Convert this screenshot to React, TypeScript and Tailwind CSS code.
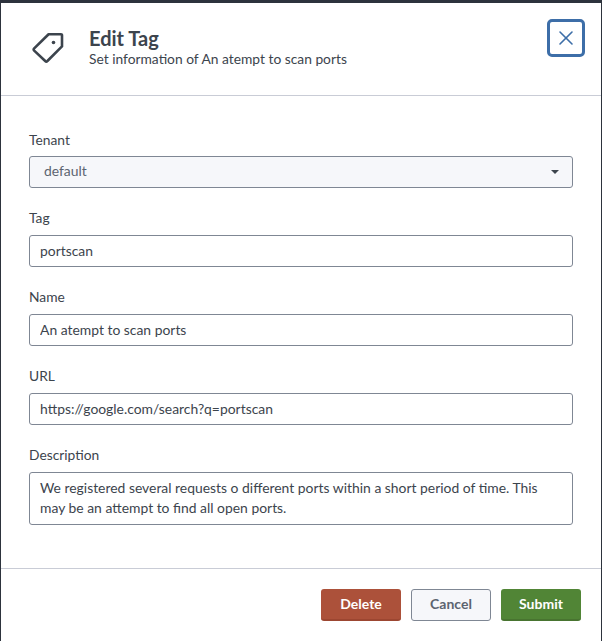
import { X } from 'lucide-react'

const fields = [
  { label: 'Tag', value: 'portscan' },
  { label: 'Name', value: 'An atempt to scan ports' },
  { label: 'URL', value: 'https://google.com/search?q=portscan' },
]

function TagIcon() {
  return (
    <svg className="w-[32px] h-[32px] text-[#3c444d]" viewBox="0 0 32 32" fill="none" stroke="currentColor" strokeWidth={2.6} strokeLinejoin="round">
      <path d="M2.2 17.4 L16.6 3.2 H29 a1 1 0 0 1 1 1 V15.4 L15.4 30 a1.6 1.6 0 0 1 -2.2 0 L2.2 19.6 a1.6 1.6 0 0 1 0 -2.2 Z" />
      <circle cx="21.5" cy="11.5" r="1.8" fill="currentColor" stroke="none" />
    </svg>
  )
}

export default function App() {
  return (
    <div className="h-[641px] w-[602px] overflow-hidden bg-[#2d333d] pt-[3px] pl-px pr-px font-['Lato',sans-serif] text-[#3c444d]">
      <div className="flex h-full flex-col bg-white">
        {/* Header */}
        <div className="flex h-[93px] shrink-0 items-start justify-between border-b border-[#c9ccd6] pl-[31px] pr-[16px]">
          <div className="flex items-center gap-[25px] pt-[23px]">
            <TagIcon />
            <div>
              <h1 className="text-[20px] leading-[24px] font-bold text-[#3c444d]">Edit Tag</h1>
              <p className="text-[13.8px] leading-[18px] text-[#3c444d]">Set information of An atempt to scan ports</p>
            </div>
          </div>
          <button className="mt-[16px] flex h-[38px] w-[38px] items-center justify-center rounded-[5px] border-[3px] border-[#3d6ea8] text-[#3d6ea8]">
            <X size={24} strokeWidth={1.6} />
          </button>
        </div>

        {/* Form */}
        <div className="flex flex-1 flex-col border-b border-[#c9ccd6] pt-[35px] pl-[28px] pr-[28px]">
          <label className="mb-[7px] block text-[13.8px] leading-[18px]">Tenant</label>
          <div className="flex h-[32px] items-center justify-between rounded-[3px] border border-[#7f8794] bg-[#f6f7fa] pb-[2px] pl-[14px] pr-[13px] text-[13.9px] text-[#5c6470]">
            <span>default</span>
            <span className="mt-[2px] h-0 w-0 border-x-[4px] border-t-[4px] border-x-transparent border-t-[#3c444d]"></span>
          </div>

          {fields.map((field) => (
            <div key={field.label} className="mt-[21px]">
              <label className="mb-[8px] block text-[13.8px] leading-[18px]">{field.label}</label>
              <input
                readOnly
                value={field.value}
                className="block h-[32px] w-full rounded-[3px] border border-[#7f8794] bg-white px-[10px] pb-[2px] text-[13.9px] text-[#3c444d] outline-none"
              />
            </div>
          ))}

          <div className="mt-[21px]">
            <label className="mb-[8px] block text-[13.8px] leading-[18px]">Description</label>
            <textarea
              readOnly
              rows={2}
              value="We registered several requests o different ports within a short period of time. This may be an attempt to find all open ports."
              className="block h-[53px] w-full resize-none rounded-[3px] border border-[#7f8794] bg-white px-[10px] py-[5px] text-[13.9px] leading-[20px] text-[#3c444d] outline-none"
            />
          </div>
        </div>

        {/* Footer */}
        <div className="flex h-[72px] shrink-0 items-start justify-end gap-[10px] pt-[20px] pr-[20px]">
          <button className="h-[32px] w-[80px] rounded-[3px] border-b-2 border-[#9c4631] bg-[#ac513a] pb-px text-[14px] font-bold text-white">Delete</button>
          <button className="h-[32px] w-[80px] rounded-[3px] border border-[#7f8794] bg-[#f6f7fa] pb-[3px] text-[14px] font-bold text-[#5c6470]">Cancel</button>
          <button className="h-[32px] w-[80px] rounded-[3px] border-b-2 border-[#487430] bg-[#518536] pb-px text-[14px] font-bold text-white">Submit</button>
        </div>
      </div>
    </div>
  )
}
